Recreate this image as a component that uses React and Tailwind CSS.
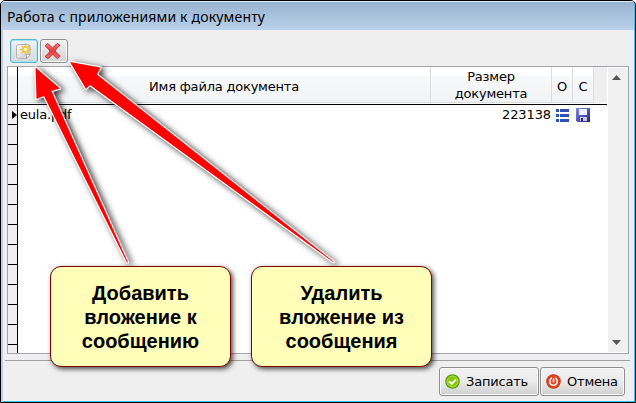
import React from "react";

const rows = [{ id: 1, name: "eula.pdf", size: 223138 }];
const emptyRows = Array.from({ length: 11 }, (_, i) => i);

function NewFileIcon() {
  return (
    <svg width="18" height="18" viewBox="0 0 18 18">
      <defs>
        <linearGradient id="page" x1="0" y1="0" x2="1" y2="1">
          <stop offset="0" stopColor="#fff" />
          <stop offset="1" stopColor="#c6c6c6" />
        </linearGradient>
      </defs>
      <path
        d="M4 2.500h9a2 2 0 0 1 2 2v8L11.500 16.500H3.500A2 2 0 0 1 1.500 14.500V5A2.500 2.500 0 0 1 4 2.500z"
        fill="url(#page)"
        stroke="#b4b4b4"
      />
      <path d="M15 12.500h-3.500v4z" fill="#fff" stroke="#999" strokeWidth="0.7" />
      <path
        d="M10.500 1l1 4 3.200-1.500-1.600 3 3.600 1-3.600 1.100 1.600 3-3.200-1.500-1 4-1.100-4-3.200 1.500 1.600-3-3.600-1.100 3.600-1-1.600-3 3.200 1.500z"
        fill="#f3c93f"
        stroke="#e3b548"
        strokeWidth="0.3"
      />
      <circle cx="10.500" cy="7.500" r="1.700" fill="#fff9cf" />
    </svg>
  );
}

function DeleteIcon() {
  return (
    <svg width="18" height="18" viewBox="0 0 18 18">
      <defs>
        <linearGradient id="cross" x1="0" y1="0" x2="0" y2="1">
          <stop offset="0" stopColor="#f58080" />
          <stop offset="0.5" stopColor="#e8383e" />
          <stop offset="1" stopColor="#f46a6a" />
        </linearGradient>
      </defs>
      <path
        d="M3.500 1.500Q6 3 8.500 6.200 11 2.800 13.500 1.500L16 3.300Q13 5.500 11 9q2.500 3.200 5.200 5L13.500 16.500Q11 15 8.600 12 6.500 15 4 16.500L1 14.500Q4 12.500 6 9.200 4 6 1.200 4z"
        fill="url(#cross)"
        stroke="#c4323a"
        strokeLinejoin="round"
      />
    </svg>
  );
}

function ListIcon() {
  return (
    <svg width="13" height="13" viewBox="0 0 13 13" shapeRendering="crispEdges" fill="#2f50b8">
      <path d="M0 0h3v3H0zM4 0h9v3H4zM0 5h3v3H0zM4 5h9v3H4zM0 10h3v3H0zM4 10h9v3H4z" />
    </svg>
  );
}

function SaveIcon() {
  return (
    <svg width="14" height="14" viewBox="0 0 14 14">
      <defs>
        <linearGradient id="disk" x1="0" y1="0" x2="1" y2="1">
          <stop offset="0" stopColor="#8290e0" />
          <stop offset="1" stopColor="#20208f" />
        </linearGradient>
      </defs>
      <path d="M0 0h14v14H1.500L0 12.500z" fill="url(#disk)" />
      <path d="M3 1h8v6H3z" fill="#eef1fa" />
      <path d="M4 9h7v4H4z" fill="#c4c8d4" />
      <path d="M5 10h2v3H5z" fill="#222b70" />
    </svg>
  );
}

function OkIcon() {
  return (
    <svg width="15" height="15" viewBox="0 0 15 15">
      <circle cx="7.500" cy="7.500" r="6.700" fill="#85c800" stroke="#5c9a12" strokeWidth="1.200" />
      <circle cx="7.500" cy="7.500" r="5.400" fill="none" stroke="#b0dc5c" />
      <path d="M4 7.200l2.700 2.600 4.300-4.300" fill="none" stroke="#fff" strokeWidth="1.900" />
    </svg>
  );
}

function CancelIcon() {
  return (
    <svg width="15" height="15" viewBox="0 0 15 15">
      <circle cx="7.500" cy="7.500" r="6.700" fill="#e04a26" stroke="#c43c1e" strokeWidth="1.200" />
      <circle cx="7.500" cy="7.500" r="3.700" fill="none" stroke="#fff" strokeWidth="1.500" />
      <path d="M7.500 2.500v5.800" stroke="#e04a26" strokeWidth="3" />
      <path d="M7.500 4.500v3.800" stroke="#fff" strokeWidth="1.400" />
    </svg>
  );
}

function HeaderCell({ className, children }) {
  return (
    <div
      className={`flex h-[36px] items-center justify-center border-r border-b border-[#dcdcdf] bg-linear-to-b from-white from-25% via-[#f8f9fb] via-25% to-[#f2f3f5] text-center leading-[17px] ${className}`}
    >
      {children}
    </div>
  );
}

function DialogButton({ icon, className, children }) {
  return (
    <button
      className={`flex h-[29px] items-center rounded-[3px] border border-[#8e8f90] bg-linear-to-b from-[#f2f2f2] from-0% via-[#ebebeb] via-50% to-[#cfcfcf] pl-[5px] text-[13px] shadow-[inset_0_0_0_1px_#fafafa] ${className}`}
    >
      {icon}
      <span className="pt-px">{children}</span>
    </button>
  );
}

function Callout({ className, children }) {
  return (
    <div
      className={`absolute top-[265px] flex h-[101px] w-[181px] items-center justify-center rounded-[11px] border border-[#800000] bg-[#ffffb9] text-center font-['Liberation_Sans',sans-serif] text-[20px] leading-[24px] font-bold tracking-normal shadow-[2px_2px_5px_rgba(0,0,0,0.7)] ${className}`}
    >
      {children}
    </div>
  );
}

export default function App() {
  return (
    <div className="relative flex h-[403px] w-[636px] flex-col overflow-hidden rounded-t-[5px] border border-black bg-[#efefef] font-['DejaVu_Sans',sans-serif] text-[13px] tracking-[-0.2px] text-black shadow-[inset_2px_0_#b9d1ea,inset_-1px_-1px_#35c5ee]">
      {/* Title bar */}
      <div className="mr-px flex h-[29px] shrink-0 items-center border-t border-[#dce7f3] bg-linear-to-b from-[#99b4d1] to-[#b9d1ea] pl-[6px] font-['Noto_Sans',sans-serif] text-[14px] tracking-[0.17px] whitespace-nowrap">
        Работа с приложениями к документу
      </div>

      {/* Toolbar */}
      <div className="flex h-[36px] shrink-0 gap-[2px] pt-[9px] pl-[9px]">
        <button className="flex h-[24px] w-[28px] items-center justify-center rounded-[3px] border border-[#5fb0c9] bg-linear-to-b from-[#f2f2f2] to-[#d3d9da] shadow-[inset_0_0_0_1px_#a5e5f5]">
          <NewFileIcon />
        </button>
        <button className="flex h-[24px] w-[28px] items-center justify-center rounded-[3px] border border-[#8e8f90] bg-linear-to-b from-[#f2f2f2] to-[#d2d2d2] pr-[2px] shadow-[inset_0_0_0_1px_#fafafa]">
          <DeleteIcon />
        </button>
      </div>

      {/* Attachments table */}
      <div className="ml-[6px] flex h-[288px] w-[622px] shrink-0 border border-[#a5a4ad] bg-white">
        <div className="w-[10px] shrink-0 border-r border-black bg-[#efefef]">
          <div className="h-[38px] border-b border-black bg-linear-to-b from-white from-25% to-[#f2f3f5] to-25%" />
          <div className="flex h-[20px] items-center justify-end border-b border-black">
            <svg width="5" height="8" viewBox="0 0 5 8">
              <path d="M0 0l5 4-5 4z" />
            </svg>
          </div>
          {emptyRows.map((i) => (
            <div key={i} className="h-[20px] border-b border-black" />
          ))}
        </div>
        <div className="w-[589px] shrink-0">
          <div className="flex h-[38px] border-b border-black">
            <HeaderCell className="w-[413px] pt-[3px]">Имя файла документа</HeaderCell>
            <HeaderCell className="w-[121px]">
              Размер
              <br />
              документа
            </HeaderCell>
            <HeaderCell className="w-[21px] pt-[3px]">О</HeaderCell>
            <HeaderCell className="w-[21px] pt-[3px]">С</HeaderCell>
            <div className="h-[36px] flex-1 bg-[#efefef]" />
          </div>
          {rows.map((row) => (
            <div key={row.id} className="flex h-[20px] items-center">
              <div className="w-[413px] pl-[2px]">{row.name}</div>
              <div className="w-[121px] pr-px text-right tracking-[-0.1px]">{row.size}</div>
              <div className="flex w-[21px] justify-center">
                <ListIcon />
              </div>
              <div className="flex w-[21px] justify-center pr-px">
                <SaveIcon />
              </div>
            </div>
          ))}
        </div>
        <div className="my-px ml-px flex flex-1 flex-col items-center justify-between bg-[#f0f0f0] py-[7px] pr-[4px]">
          <svg width="9" height="5" viewBox="0 0 9 5">
            <path d="M0 5l4.500-5L9 5z" fill="#555" />
          </svg>
          <svg width="9" height="5" viewBox="0 0 9 5">
            <path d="M0 0h9L4.500 5z" fill="#555" />
          </svg>
        </div>
      </div>

      {/* Footer */}
      <div className="mt-[6px] ml-[4px] flex w-[625px] justify-end gap-px border-t border-[#a0a0a0] pt-[6px] pr-[5px]">
        <DialogButton className="w-[100px] gap-[6px]" icon={<OkIcon />}>
          Записать
        </DialogButton>
        <DialogButton className="w-[85px] gap-[6px]" icon={<CancelIcon />}>
          Отмена
        </DialogButton>
      </div>

      {/* Arrows from the callouts to the toolbar buttons */}
      <svg
        className="absolute -top-px -left-px drop-shadow-[3px_2px_3px_rgba(0,0,0,0.8)]"
        width="636"
        height="403"
        viewBox="0 0 636 403"
        fill="#f00"
        stroke="#fff"
        strokeWidth="2.400"
        paintOrder="stroke"
        strokeLinejoin="round"
      >
        <path d="M35.500 67.500L60 88.500 51.500 91 128 262.500 127 262.500 44 96 36.500 99z" />
        <path d="M70 62L100.500 67.500 97 74.500 334 262 333 262 90 85 86 89z" />
      </svg>

      <Callout className="left-[49px]">
        Добавить
        <br />
        вложение к
        <br />
        сообщению
      </Callout>
      <Callout className="left-[250px]">
        Удалить
        <br />
        вложение из
        <br />
        сообщения
      </Callout>
    </div>
  );
}
